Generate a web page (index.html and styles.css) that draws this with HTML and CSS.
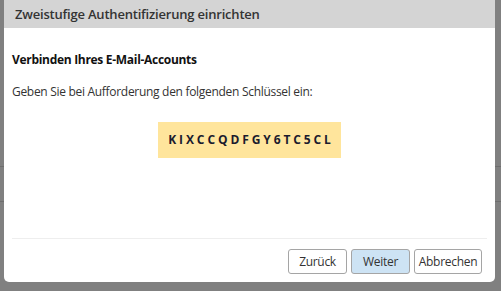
FILE: index.html
```html
<!DOCTYPE html>
<html lang="de">
<head>
    <meta charset="UTF-8">
    <title>Zweistufige Authentifizierung</title>
    <link rel="stylesheet" href="styles.css">
</head>
<body>
<div class="dialog">
    <div class="dialog-title">Zweistufige Authentifizierung einrichten</div>
    <div class="dialog-body">
        <h3 class="step-title">Verbinden Ihres E-Mail-Accounts</h3>
        <p class="step-text">Geben Sie bei Aufforderung den folgenden Schlüssel ein:</p>
        <div class="secret-wrap">
            <span class="secret">KIXCCQDFGY6TC5CL</span>
        </div>
    </div>
    <div class="dialog-footer">
        <button class="btn btn-back">Zurück</button>
        <button class="btn btn-primary">Weiter</button>
        <button class="btn btn-cancel">Abbrechen</button>
    </div>
</div>
</body>
</html>
```

FILE: styles.css
```css
html, body {
    height: 100%;
}

body {
    margin: 0;

    font-family: "Open Sans", "Noto Sans", sans-serif;
    color: #333;

    background-color: #808080;
    background-image:
        linear-gradient(#6e6e6e, #6e6e6e),
        linear-gradient(#6e6e6e, #6e6e6e);
    background-repeat: no-repeat;
    background-size: 100% 1px, 100% 1px;
    background-position: 0 166px, 0 201px;
}

.dialog {
    display: flex;
    flex-direction: column;

    width: 491px;
    height: 282px;
    margin-left: 4px;

    background-color: #fff;
    border-radius: 0 0 5px 5px;
    overflow: hidden;
}

.dialog-title {
    height: 28px;
    padding-left: 11px;

    font-size: 13px;
    font-weight: 600;
    line-height: 28px;
    letter-spacing: -0.2px;

    background-color: #d4d4d4;
}

.dialog-body {
    flex: 1;
    padding: 0 8px;
}

.step-title {
    margin: 24px 0 0;

    font-size: 12px;
    font-weight: 700;
    line-height: 16px;
    letter-spacing: -0.3px;
    color: #111;
}

.step-text {
    margin: 16px 0 0;

    font-size: 12px;
    line-height: 16px;
    letter-spacing: -0.3px;
}

.secret-wrap {
    display: flex;
    justify-content: center;

    margin-top: 22px;
}

.secret {
    width: 183px;
    height: 36px;

    font-size: 12px;
    font-weight: 700;
    line-height: 36px;
    letter-spacing: 2.9px;
    text-align: center;
    text-indent: 3px;
    color: #1b1b2e;

    background-color: #ffe59c;
}

.dialog-footer {
    display: flex;
    justify-content: flex-end;
    gap: 4px;

    margin: 0 8px;
    padding: 10px 5px 8px 0;

    border-top: 1px solid #eee;
}

.btn {
    height: 25px;
    padding: 0;

    font-family: inherit;
    font-size: 12px;
    letter-spacing: -0.3px;
    color: #333;

    background-color: #fff;
    border: 1px solid #a5a5a5;
    border-radius: 3px;
}

.btn-back {
    width: 59px;
}

.btn-primary {
    width: 59px;

    background-color: #cde3f4;
}

.btn-cancel {
    width: 68px;
}
```
